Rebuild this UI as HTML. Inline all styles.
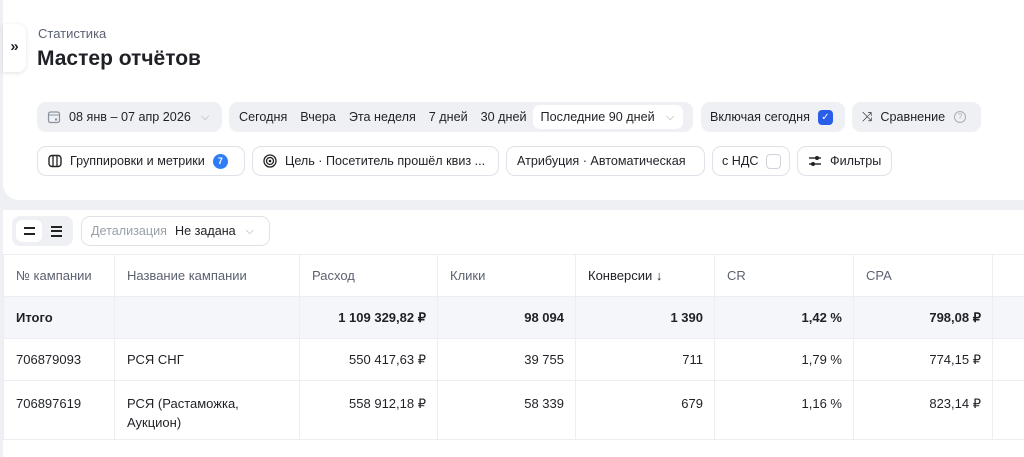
<!DOCTYPE html>
<html><head><meta charset="utf-8"><style>
*{box-sizing:border-box;margin:0;padding:0}
body{width:1024px;height:457px;overflow:hidden;background:#eef0f4;font-family:"Liberation Sans",sans-serif;color:#1f2126;position:relative;font-size:13px}
.top{position:absolute;left:3px;top:0;width:1021px;height:200px;background:#fff;border-radius:0 0 0 16px}
.tog{position:absolute;left:3px;top:24px;width:23px;height:48px;background:#fff;border-radius:0 8px 8px 0;box-shadow:0 1px 4px rgba(0,0,0,.12);font-size:15px;text-align:center;line-height:46px;font-weight:bold}
.a{position:absolute;white-space:nowrap}
.chip{position:absolute;height:30px;border-radius:9px;display:flex;align-items:center;white-space:nowrap;font-size:12.6px}
.g{background:#eef0f4}
.o{border:1px solid #dfe2e8;background:#fff}
.tab{position:absolute;left:3px;top:210px;width:1021px;height:247px;background:#fff}
table{position:absolute;left:3px;top:254px;border-collapse:collapse;font-size:13px;table-layout:fixed;width:1040px}
td{border:1px solid #eceef2;padding:0 12px;height:42px;overflow:hidden;white-space:nowrap}
tr.h td{color:#5b6270}
tr.t td{background:#f4f6f9;font-weight:bold}
.r{text-align:right;padding-right:11px}
.v td{vertical-align:top;padding-top:13px;line-height:19px;height:59px}
</style></head><body>
<div class="top"></div>
<div class="tog">»</div>
<div class="a" style="left:38px;top:26px;font-size:13px;color:#5b6270">Статистика</div>
<div class="a" style="left:37px;top:47px;font-size:21px;font-weight:bold">Мастер отчётов</div>

<div class="chip g" style="left:37px;top:102px;width:185px;padding-left:10px">
<svg width="14" height="14" viewBox="0 0 14 14" style="margin-right:8px"><rect x="1.5" y="2" width="11" height="10.5" rx="2" fill="none" stroke="#8a909c" stroke-width="1.2"/><line x1="1.5" y1="5" x2="12.5" y2="5" stroke="#8a909c"/><rect x="8" y="8.5" width="2" height="2" fill="#8a909c"/></svg>08 янв – 07 апр 2026<span style="color:#9aa0ab;margin-left:10px;font-size:11px">⌵</span></div>
<div class="chip g" style="left:229px;top:102px;width:464px;padding-left:10px">Сегодня<span style="margin-left:13px">Вчера</span><span style="margin-left:13px">Эта неделя</span><span style="margin-left:13px">7 дней</span><span style="margin-left:13px">30 дней</span>
<span style="margin-left:6px;background:#fff;border-radius:7px;height:24px;padding:0 8px;display:flex;align-items:center;width:150px">Последние 90 дней<span style="color:#9aa0ab;margin-left:auto;font-size:11px">⌵</span></span></div>
<div class="chip g" style="left:701px;top:102px;width:144px;padding-left:9px">Включая сегодня<span style="margin-left:8px;width:15px;height:15px;background:#2a5ee8;border-radius:4px;color:#fff;font-size:10px;text-align:center;line-height:15px">✓</span></div>
<div class="chip g" style="left:852px;top:102px;width:129px;padding-left:10px"><span style="font-size:13px;margin-right:8px">⤨</span>Сравнение<span style="margin-left:9px;width:12px;height:12px;border:1px solid #a8aeb8;border-radius:50%;color:#a8aeb8;font-size:8px;text-align:center;line-height:10px">?</span></div>

<div class="chip o" style="left:37px;top:146px;width:208px;padding-left:10px">
<svg width="14" height="14" viewBox="0 0 14 14" style="margin-right:8px"><rect x="1" y="1.5" width="12" height="11" rx="3" fill="none" stroke="#222" stroke-width="1.4"/><line x1="5" y1="2" x2="5" y2="12" stroke="#222" stroke-width="1.3"/><line x1="9" y1="2" x2="9" y2="12" stroke="#222" stroke-width="1.3"/></svg>Группировки и метрики<span style="margin-left:8px;width:15px;height:15px;border-radius:50%;background:#2e7cf6;color:#fff;font-size:9px;font-weight:bold;text-align:center;line-height:15px">7</span></div>
<div class="chip o" style="left:252px;top:146px;width:247px;padding-left:10px">
<svg width="14" height="14" viewBox="0 0 14 14" style="margin-right:8px"><circle cx="7" cy="7" r="6" fill="none" stroke="#222" stroke-width="1.3"/><circle cx="7" cy="7" r="3.5" fill="none" stroke="#222" stroke-width="1.3"/><circle cx="7" cy="7" r="1.3" fill="#222"/></svg>Цель · Посетитель прошёл квиз ...</div>
<div class="chip o" style="left:506px;top:146px;width:199px;padding-left:10px">Атрибуция · Автоматическая</div>
<div class="chip o" style="left:712px;top:146px;width:78px;padding-left:9px">с НДС<span style="margin-left:7px;width:15px;height:15px;border:1px solid #cfd3da;border-radius:4px"></span></div>
<div class="chip o" style="left:797px;top:146px;width:95px;padding-left:10px"><svg width="14" height="12" viewBox="0 0 14 12" style="margin-right:8px"><line x1="1" y1="3" x2="13" y2="3" stroke="#222" stroke-width="1.4"/><line x1="1" y1="9" x2="13" y2="9" stroke="#222" stroke-width="1.4"/><circle cx="9" cy="3" r="2" fill="#222"/><circle cx="5" cy="9" r="2" fill="#222"/></svg>Фильтры</div>

<div class="tab"></div>
<div class="chip g" style="left:12px;top:216px;width:61px;height:30px;border-radius:8px">
<span style="margin-left:4px;width:26px;height:22px;background:#fff;border-radius:6px;display:flex;flex-direction:column;justify-content:center;align-items:center;gap:4px"><i style="width:11px;height:2px;background:#222"></i><i style="width:11px;height:2px;background:#222"></i></span>
<span style="margin-left:9px;display:flex;flex-direction:column;gap:2.5px"><i style="width:11px;height:2px;background:#222"></i><i style="width:11px;height:2px;background:#222"></i><i style="width:11px;height:2px;background:#222"></i></span></div>
<div class="chip o" style="left:81px;top:216px;width:189px;padding-left:9px"><span style="color:#9aa0ab">Детализация</span><span style="margin-left:8px">Не задана</span><span style="color:#9aa0ab;margin-left:10px;font-size:11px">⌵</span></div>

<table>
<colgroup><col style="width:111px"><col style="width:185px"><col style="width:138px"><col style="width:138px"><col style="width:139px"><col style="width:139px"><col style="width:139px"><col style="width:51px"></colgroup>
<tr class="h"><td>№ кампании</td><td>Название кампании</td><td>Расход</td><td>Клики</td><td style="color:#1f2126">Конверсии ↓</td><td>CR</td><td>CPA</td><td></td></tr>
<tr class="t"><td>Итого</td><td></td><td class="r">1 109 329,82 ₽</td><td class="r">98 094</td><td class="r">1 390</td><td class="r">1,42 %</td><td class="r">798,08 ₽</td><td></td></tr>
<tr><td>706879093</td><td>РСЯ СНГ</td><td class="r">550 417,63 ₽</td><td class="r">39 755</td><td class="r">711</td><td class="r">1,79 %</td><td class="r">774,15 ₽</td><td></td></tr>
<tr class="v"><td>706897619</td><td style="white-space:normal">РСЯ (Растаможка,<br>Аукцион)</td><td class="r">558 912,18 ₽</td><td class="r">58 339</td><td class="r">679</td><td class="r">1,16 %</td><td class="r">823,14 ₽</td><td></td></tr>
</table>
</body></html>
